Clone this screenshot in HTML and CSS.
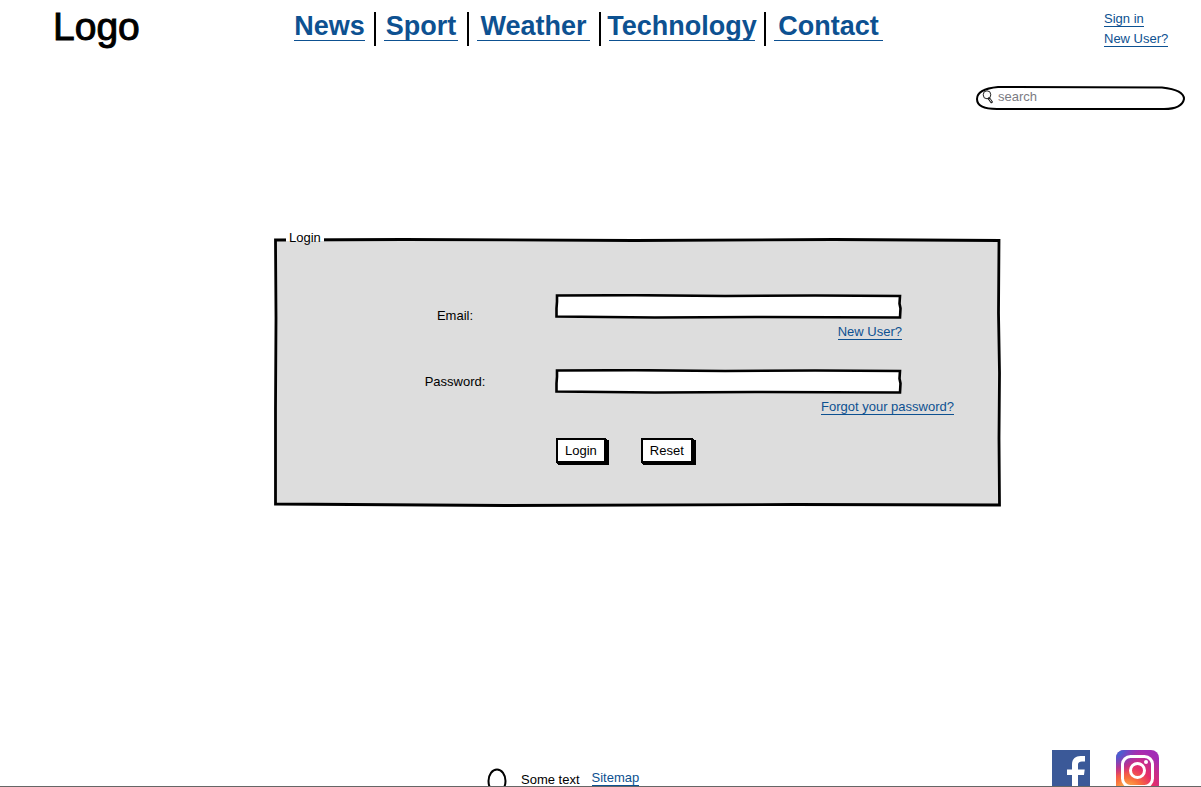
FILE: index.html
```html
<!DOCTYPE html>
<html lang="en">
<head>
<meta charset="utf-8">
<title>Login</title>
<link rel="stylesheet" href="styles.css">
</head>
<body>
<div class="page">
  <header class="header">
    <div class="logo">Logo</div>
    <nav class="nav" aria-label="Main">
      <a href="#news">News</a>
      <span class="bar"></span>
      <a href="#sport">Sport</a>
      <span class="bar"></span>
      <a href="#weather">Weather</a>
      <span class="bar"></span>
      <a href="#technology">Technology</a>
      <span class="bar"></span>
      <a href="#contact">Contact</a>
    </nav>
    <div class="account">
      <a class="link" href="#signin">Sign in</a>
      <a class="link" href="#register">New User?</a>
    </div>
  </header>

  <form class="search" role="search">
    <svg class="frame" viewBox="0 0 209 24" preserveAspectRatio="none" aria-hidden="true">
      <path d="M22 1 L186 1.600 Q208 4 208 13 Q206 23 188 23 L21 23 Q1 23 1 13 Q1 3 22 1Z" fill="#fff" stroke="#000" stroke-width="2"/>
    </svg>
    <svg class="lens" viewBox="0 0 12 14" aria-hidden="true">
      <ellipse cx="5" cy="4.800" rx="3.800" ry="4" fill="none" stroke="#222" stroke-width="1"/>
      <path d="M7 8.500 L9.500 12" fill="none" stroke="#222" stroke-width="2.600" stroke-linecap="round"/>
      <path d="M7.500 9 L9.400 11.800" stroke="#fff" stroke-width=".8"/>
    </svg>
    <input class="search-input" type="text" placeholder="search" aria-label="Search">
  </form>

  <main class="main">
    <form>
      <fieldset class="panel">
        <svg class="frame" viewBox="0 0 727 269" preserveAspectRatio="none" aria-hidden="true">
          <path d="M1.500 2 L130 1.500 L360 2.500 L560 1.500 L725 2.500 L724.500 75 L725.500 135 L725 200 L725.500 267 L520 266.500 L230 267.500 L1.500 266 L1.500 170 L2 80Z" fill="#ddd" stroke="#000" stroke-width="2.800"/>
        </svg>
        <legend class="legend">Login</legend>
        <div class="row">
          <label class="label label-email" for="email">Email:</label>
          <div class="field">
            <svg class="frame" viewBox="0 0 347 26" preserveAspectRatio="none" aria-hidden="true">
              <path d="M2 1.500 L80 1.200 L170 2 L260 1.500 L345 2 L344.500 10 L345.500 15 L345 24.500 L200 24 L100 24.500 L1.500 23.500 L1.500 15 L2 8Z" fill="#fff" stroke="#000" stroke-width="2.600"/>
            </svg>
            <input class="field-input" id="email" type="text">
          </div>
          <a class="link link-new" href="#register">New User?</a>
        </div>
        <div class="row row-password">
          <label class="label" for="password">Password:</label>
          <div class="field">
            <svg class="frame" viewBox="0 0 347 26" preserveAspectRatio="none" aria-hidden="true">
              <path d="M2 1.500 L80 1.200 L170 2 L260 1.500 L345 2 L344.500 10 L345.500 15 L345 24.500 L200 24 L100 24.500 L1.500 23.500 L1.500 15 L2 8Z" fill="#fff" stroke="#000" stroke-width="2.600"/>
            </svg>
            <input class="field-input" id="password" type="password">
          </div>
          <a class="link link-forgot" href="#forgot">Forgot your password?</a>
        </div>
        <div class="actions">
          <button class="button" type="submit">Login</button>
          <button class="button" type="reset">Reset</button>
        </div>
      </fieldset>
    </form>
  </main>

  <footer class="footer">
    <svg class="ring" viewBox="0 0 20 26" aria-hidden="true">
      <ellipse cx="10" cy="13" rx="8.500" ry="11.500" fill="none" stroke="#000" stroke-width="2"/>
    </svg>
    <span class="note">Some text</span>
    <a class="link sitemap" href="#sitemap">Sitemap</a>
    <div class="social">
      <a href="#facebook" aria-label="Facebook">
        <svg class="facebook" viewBox="0 0 38 38" aria-hidden="true">
          <path fill="#3b5998" d="M0 0H38V38H0Z"/>
          <path fill="#fff" d="M20 38V25H15V19.500H20V14.500C20 9 23.500 6 28.500 6H33V11.500H30C27 11.500 26 12.800 26 15V19.500H32.700L32 25H26V38Z"/>
        </svg>
      </a>
      <a href="#instagram" aria-label="Instagram">
        <svg class="instagram" viewBox="0 0 43 43" aria-hidden="true">
          <defs>
            <radialGradient id="warm" gradientUnits="userSpaceOnUse" cx="11" cy="44" r="46">
              <stop offset="0" stop-color="#fd5"/>
              <stop offset=".1" stop-color="#fdc050"/>
              <stop offset=".35" stop-color="#f9703c"/>
              <stop offset=".6" stop-color="#e62e68"/>
              <stop offset="1" stop-color="#a32bb5"/>
            </radialGradient>
            <radialGradient id="cool" gradientUnits="userSpaceOnUse" cx="-2" cy="-2" r="28">
              <stop offset="0" stop-color="#3771d8"/>
              <stop offset=".3" stop-color="#4a5fd0"/>
              <stop offset="1" stop-color="#8030d0" stop-opacity="0"/>
            </radialGradient>
          </defs>
          <rect width="43" height="43" rx="8" fill="url(#warm)"/>
          <rect width="43" height="43" rx="8" fill="url(#cool)"/>
          <rect x="6.500" y="6.500" width="30" height="30" rx="8" fill="none" stroke="#fff" stroke-width="3"/>
          <circle cx="21.500" cy="20.500" r="7" fill="none" stroke="#fff" stroke-width="3"/>
          <circle cx="30" cy="12" r="2" fill="#fff"/>
        </svg>
      </a>
    </div>
  </footer>
</div>
</body>
</html>
```
FILE: styles.css
```css
* {
  box-sizing: border-box;
}

body {
  margin: 0;
  background: #fff;
  color: #000;
  font: 13px/16px "Liberation Sans", Arial, sans-serif;
}

.page {
  display: flex;
  flex-direction: column;
  min-height: 100vh;
  border-bottom: 1px solid #666;
}

.header {
  display: flex;
  align-items: flex-start;
  padding: 12px 31px 0 53px;
}

.logo {
  width: 90px;
  font-size: 39px;
  line-height: 30px;
  -webkit-text-stroke: 1px #000;
}

.nav {
  display: grid;
  grid-template-columns: 71px 3px 74px 3px 113px 3px 146px 3px 109px;
  column-gap: 8px;
  margin-left: 151px;
}

.nav a {
  display: flex;
  justify-content: center;
  height: 29px;
  border-bottom: 1px solid #0d5191;
  color: #0d5191;
  font-size: 27px;
  font-weight: bold;
  line-height: 28px;
  text-decoration: none;
  white-space: nowrap;
}

.bar {
  height: 34px;
  border-right: 2px solid #000;
}

.account {
  display: flex;
  flex-direction: column;
  align-items: flex-start;
  gap: 5px;
  width: 66px;
  margin-left: auto;
}

.link {
  border-bottom: 1px solid #0d5191;
  color: #0d5191;
  line-height: 14px;
  text-decoration: none;
  white-space: nowrap;
}

.frame {
  position: absolute;
  inset: 0;
  z-index: -1;
  width: 100%;
  height: 100%;
}

.search {
  position: relative;
  z-index: 0;
  display: flex;
  align-items: center;
  align-self: flex-end;
  width: 209px;
  height: 24px;
  margin: 39px 16px 0 0;
  padding: 0 20px 2px 6px;
}

.lens {
  flex: none;
  width: 12px;
  height: 14px;
}

.search-input {
  flex: 1;
  min-width: 0;
  padding: 0 4px;
  border: 0;
  outline: 0;
  background: none;
  font: inherit;
}

.search-input::placeholder {
  color: #7b7b83;
  opacity: 1;
}

.main {
  padding: 128px 200px 40px 274px;
}

.panel {
  position: relative;
  z-index: 0;
  min-width: 0;
  margin: 0;
  padding: 56px 0 44px;
  border: 0;
}

.legend {
  position: absolute;
  top: -8px;
  left: 12px;
  padding: 0 3px;
  background: linear-gradient(#fff 11px, #ddd 11px);
}

.row {
  display: grid;
  grid-template-columns: 281px minmax(0, 347px);
  row-gap: 6px;
  align-items: center;
}

.row-password {
  margin-top: 29px;
}

.label {
  padding-left: 81px;
  text-align: center;
}

.label-email {
  height: 16px;
  margin-top: 14px;
  margin-bottom: -5px;
}

.field {
  position: relative;
  z-index: 0;
  height: 25px;
}

.field-input {
  width: 100%;
  height: 100%;
  padding: 0 6px;
  border: 0;
  outline: 0;
  background: none;
  font: inherit;
}

.link-new {
  grid-column: 2;
  justify-self: end;
}

.link-forgot {
  grid-column: 2;
  justify-self: start;
  margin-left: 266px;
}

.actions {
  display: flex;
  gap: 35px;
  margin: 23px 0 0 282px;
}

.button {
  height: 25px;
  padding: 0 7px;
  border: 2px solid #000;
  background: #fff;
  box-shadow: 1px 1px #000, 2px 2px #000, 3px 2px #000;
  color: #000;
  font: inherit;
}

.footer {
  display: flex;
  align-items: flex-start;
  height: 36px;
  margin-top: auto;
  padding: 0 42px 0 487px;
  overflow: hidden;
}

.ring {
  flex: none;
  width: 20px;
  height: 26px;
  margin-top: 18px;
}

.note {
  margin: 24px 0 0 14px;
  line-height: 12px;
  white-space: nowrap;
}

.sitemap {
  margin: 21px 0 0 12px;
}

.social {
  display: flex;
  gap: 26px;
  margin-left: auto;
}

.facebook,
.instagram {
  display: block;
}

.facebook {
  width: 38px;
}

.instagram {
  width: 43px;
}
```
